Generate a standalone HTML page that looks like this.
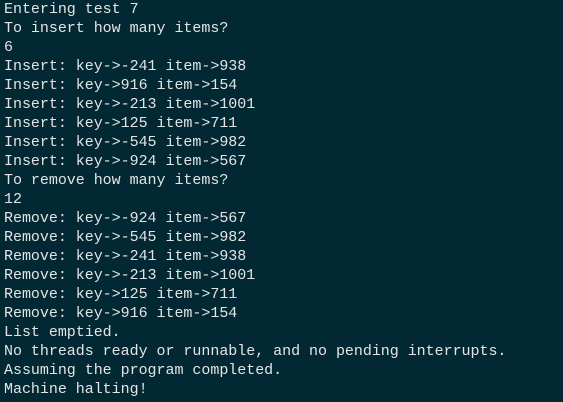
<!DOCTYPE html>
<html><head><style>
html,body{margin:0;padding:0;background:#022833;width:563px;height:402px;overflow:hidden}
pre{margin:0;padding:0 0 0 4px;font-family:"Liberation Mono","DejaVu Sans Mono",monospace;font-size:15px;line-height:19px;letter-spacing:-0.03px;color:#e4e4e4}
</style></head><body><pre>Entering test 7
To insert how many items?
6
Insert: key->-241 item->938
Insert: key->916 item->154
Insert: key->-213 item->1001
Insert: key->125 item->711
Insert: key->-545 item->982
Insert: key->-924 item->567
To remove how many items?
12
Remove: key->-924 item->567
Remove: key->-545 item->982
Remove: key->-241 item->938
Remove: key->-213 item->1001
Remove: key->125 item->711
Remove: key->916 item->154
List emptied.
No threads ready or runnable, and no pending interrupts.
Assuming the program completed.
Machine halting!</pre></body></html>
